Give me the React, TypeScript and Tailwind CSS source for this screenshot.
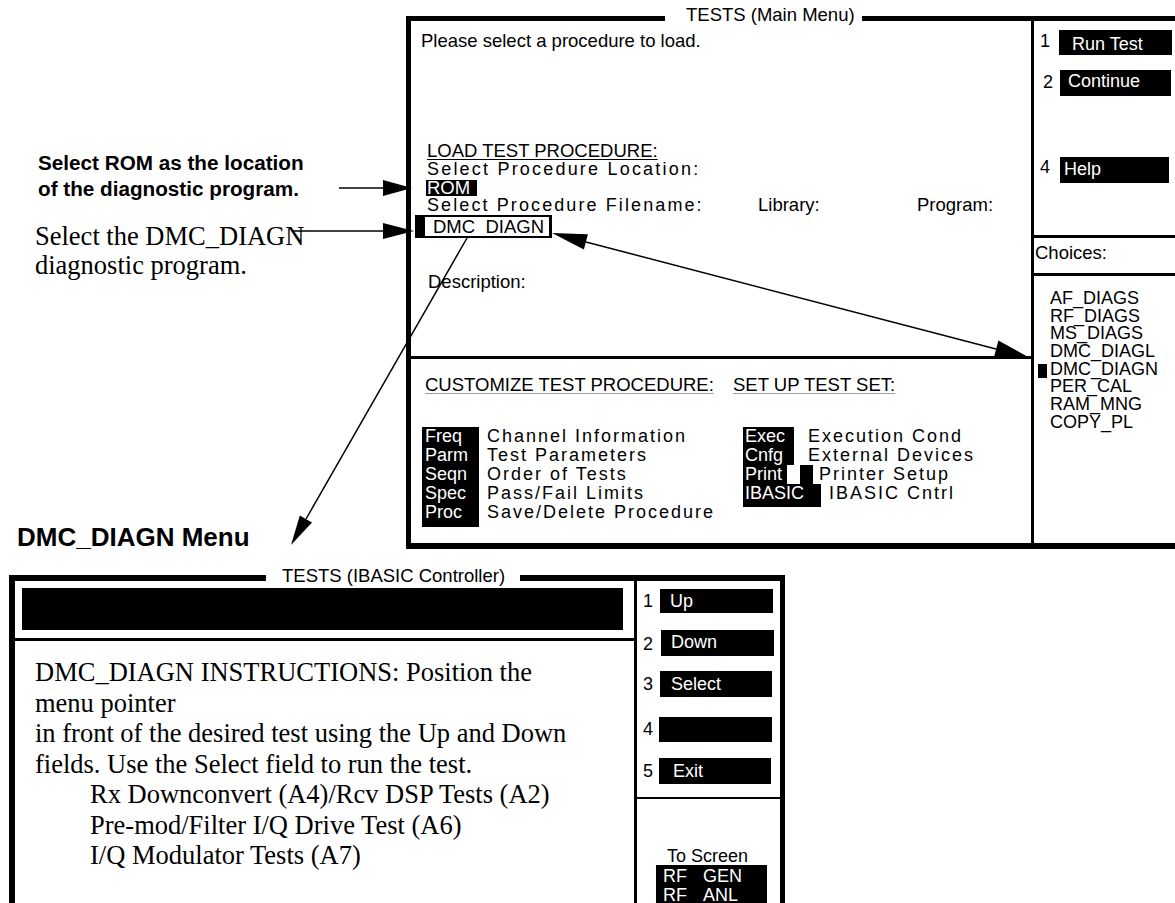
import React from "react"

/* ---------- data ---------- */
const choices = [
  "AF_DIAGS",
  "RF_DIAGS",
  "MS_DIAGS",
  "DMC_DIAGL",
  "DMC_DIAGN",
  "PER_CAL",
  "RAM_MNG",
  "COPY_PL",
]

const customize = [
  ["Freq", "Channel Information"],
  ["Parm", "Test Parameters"],
  ["Seqn", "Order of Tests"],
  ["Spec", "Pass/Fail Limits"],
  ["Proc", "Save/Delete Procedure"],
]

const ibasicKeys = [
  { n: "1", label: "Up", row: "mt-[8px]", digit: "w-[23px] pt-[3px]", box: "w-[113px] h-[24px] pl-[10px] pt-[3px]" },
  { n: "2", label: "Down", row: "mt-[17px]", digit: "w-[24px] pt-[5px]", box: "w-[113px] h-[26px] pl-[10px] pt-[3px]" },
  { n: "3", label: "Select", row: "mt-[15px]", digit: "w-[23px] pt-[4px]", box: "w-[112px] h-[26px] pl-[11px] pt-[4px]" },
  { n: "4", label: "", row: "mt-[20px]", digit: "w-[22px] pt-[3px]", box: "w-[113px] h-[25px] pl-[10px] pt-[3px]" },
  { n: "5", label: "Exit", row: "mt-[16px]", digit: "w-[22px] pt-[4px]", box: "w-[112px] h-[26px] pl-[14px] pt-[4px]" },
]

const serif = "font-['Liberation_Serif','Times_New_Roman',serif]"

/* ---------- left notes ---------- */
function LeftNotes() {
  return (
    <div className="w-[406px] shrink-0 flex flex-col">
      <div className="mt-[134px] pl-[38px] font-bold text-[20.7px] leading-[26px]">
        <div>Select ROM as the location</div>
        <div>of the diagnostic program.</div>
      </div>
      <div className={`mt-[20px] pl-[35px] text-[26.5px] leading-[29px] ${serif}`}>
        <div>Select the DMC_DIAGN</div>
        <div>diagnostic program.</div>
      </div>
      <div className="mt-[244px] h-[24px] pl-[17px] font-bold text-[26px] leading-[26px] whitespace-nowrap">
        DMC_DIAGN Menu
      </div>
    </div>
  )
}

/* ---------- TESTS (Main Menu) ---------- */
function MainMenu() {
  return (
    <div className="w-[769px] shrink-0 flex flex-col">
      {/* title on the top border */}
      <div className="flex h-[5px] items-start">
        <div className="w-[259px] h-[5px] bg-black" />
        <div className="ml-[21px] -mt-[10px] text-[18.5px] leading-[18px] whitespace-nowrap">
          TESTS (Main Menu)
        </div>
        <div className="ml-[7px] flex-1 h-[5px] bg-black" />
      </div>

      <div className="flex h-[528px] border-l-[5px] border-b-[6px] border-black">
        {/* main area */}
        <div className="w-[620px] flex flex-col">
          <div className="h-[335px] flex flex-col">
            <div className="mt-[11px] pl-[10px] text-[18.5px] leading-[18px]">
              Please select a procedure to load.
            </div>
            <div className="mt-[92px] pl-[16px] text-[18.5px] leading-[18px] underline underline-offset-[2px]">
              LOAD TEST PROCEDURE:
            </div>
            <div className="pl-[16px] text-[18px] leading-[18px] tracking-[2.2px] whitespace-nowrap">
              Select Procedure Location:
            </div>
            <div className="ml-[15px] mt-[2px] w-[51px] h-[16px] bg-black text-white text-[18.5px] leading-[16px] pl-[1px]">
              ROM
            </div>
            <div className="flex pl-[16px] text-[18px] leading-[18px] whitespace-nowrap">
              <div className="w-[331px] tracking-[2.1px]">Select Procedure Filename:</div>
              <div className="w-[159px] text-[18.5px]">Library:</div>
              <div className="text-[18.5px]">Program:</div>
            </div>
            <div className="ml-[4px] mt-[1px] w-[137px] h-[23px] bg-black pl-[10px] pt-[2px] pr-[3px] pb-[2px]">
              <div className="h-full bg-white pl-[8px] text-[18.5px] leading-[19px]">DMC_DIAGN</div>
            </div>
            <div className="mt-[35px] pl-[17px] text-[18.5px] leading-[18px]">Description:</div>
          </div>

          <div className="h-[3px] bg-black" />

          <div className="flex-1 pt-[17px] pl-[14px]">
            <div className="flex text-[18.5px] leading-[18px] whitespace-nowrap">
              <div className="w-[308px] underline underline-offset-[2px] decoration-gray-400">
                CUSTOMIZE TEST PROCEDURE:
              </div>
              <div className="underline underline-offset-[2px] decoration-gray-400">SET UP TEST SET:</div>
            </div>

            <div className="mt-[33px] -ml-[3px] flex text-[18px] leading-[19px] whitespace-nowrap">
              <div className="w-[321px] flex">
                <div className="w-[57px] bg-black text-white pl-[3px] pb-[5px]">
                  {customize.map(([k]) => (
                    <div key={k}>{k}</div>
                  ))}
                </div>
                <div className="pl-[8px] tracking-[2px]">
                  {customize.map(([k, v]) => (
                    <div key={k}>{v}</div>
                  ))}
                </div>
              </div>

              <div className="flex flex-col">
                <div className="flex h-[19px]">
                  <div className="w-[51px] bg-black text-white pl-[2px]">Exec</div>
                  <div className="ml-[14px] tracking-[2px]">Execution Cond</div>
                </div>
                <div className="flex h-[19px]">
                  <div className="w-[51px] bg-black text-white pl-[2px]">Cnfg</div>
                  <div className="ml-[14px] tracking-[2px]">External Devices</div>
                </div>
                <div className="flex h-[19px]">
                  <div className="w-[44px] bg-black text-white pl-[2px]">Print</div>
                  <div className="ml-[13px] w-[13px] bg-black" />
                  <div className="ml-[6px] tracking-[2px]">Printer Setup</div>
                </div>
                <div className="flex">
                  <div className="w-[78px] h-[23px] bg-black text-white pl-[2px]">IBASIC</div>
                  <div className="ml-[8px] tracking-[2px]">IBASIC Cntrl</div>
                </div>
              </div>
            </div>
          </div>
        </div>

        <div className="w-[3px] bg-black" />

        {/* right column */}
        <div className="flex-1 flex flex-col text-[18px] leading-[18px]">
          <div className="h-[214px]">
            <div className="flex mt-[9px]">
              <div className="w-[25px] pl-[6px] pt-[2px]">1</div>
              <div className="w-[113px] h-[25px] bg-black text-white pl-[13px] pt-[5px]">Run Test</div>
            </div>
            <div className="flex mt-[15px]">
              <div className="w-[26px] pl-[9px] pt-[3px]">2</div>
              <div className="w-[111px] h-[26px] bg-black text-white pl-[8px] pt-[2px]">Continue</div>
            </div>
            <div className="flex mt-[61px]">
              <div className="w-[26px] pl-[6px] pt-[1px]">4</div>
              <div className="w-[109px] h-[26px] bg-black text-white pl-[4px] pt-[3px]">Help</div>
            </div>
          </div>
          <div className="h-[3px] -ml-[2px] bg-black" />
          <div className="h-[35px] pl-[1px] pt-[6px] text-[18.5px]">Choices:</div>
          <div className="h-[3px] -ml-[2px] bg-black" />
          <div className="flex-1 pt-[14px] pl-[4px] text-[18px] leading-[17.7px]">
            {choices.map((c) => (
              <div key={c} className="flex h-[17.7px]">
                <div className="w-[12px]">
                  {c === "DMC_DIAGN" && <div className="mt-[3px] w-[9px] h-[14px] bg-black" />}
                </div>
                <div>{c}</div>
              </div>
            ))}
          </div>
        </div>
      </div>
    </div>
  )
}

/* ---------- TESTS (IBASIC Controller) ---------- */
function IbasicPanel() {
  return (
    <div className="mt-[26px] ml-[9px] w-[776px] flex flex-col">
      <div className="flex h-[6px] items-start">
        <div className="w-[257px] h-[6px] bg-black" />
        <div className="ml-[16px] -mt-[8px] text-[18.5px] leading-[18px] whitespace-nowrap">
          TESTS (IBASIC Controller)
        </div>
        <div className="ml-[15px] flex-1 h-[6px] bg-black" />
      </div>

      <div className="flex h-[330px] border-l-[6px] border-r-[5px] border-black">
        <div className="w-[619px] flex flex-col">
          <div className="h-[57px] pt-[7px] pl-[7px]">
            <div className="w-[601px] h-[42px] bg-black" />
          </div>
          <div className="h-[3px] bg-black" />
          <div className={`pt-[16px] pl-[20px] text-[26.5px] leading-[30.5px] whitespace-nowrap ${serif}`}>
            <div>DMC_DIAGN INSTRUCTIONS: Position the</div>
            <div>menu pointer</div>
            <div>in front of the desired test using the Up and Down</div>
            <div>fields. Use the Select field to run the test.</div>
            <div className="pl-[55px]">
              <div>Rx Downconvert (A4)/Rcv DSP Tests (A2)</div>
              <div>Pre-mod/Filter I/Q Drive Test (A6)</div>
              <div>I/Q Modulator Tests (A7)</div>
            </div>
          </div>
        </div>

        <div className="w-[3px] bg-black" />

        <div className="flex-1 flex flex-col text-[18px] leading-[18px]">
          {ibasicKeys.map((k) => (
            <div key={k.n} className={`flex ${k.row}`}>
              <div className={`pl-[6px] ${k.digit}`}>{k.n}</div>
              <div className={`bg-black text-white ${k.box}`}>{k.label}</div>
            </div>
          ))}
          <div className="mt-[13px] h-[3px] bg-black" />
          <div className="mt-[48px] pl-[30px] whitespace-nowrap">To Screen</div>
          <div className="ml-[19px] w-[111px] h-[60px] bg-black text-white pl-[7px] pt-[2px] leading-[19px]">
            <div className="flex">
              <div className="w-[40px]">RF</div>
              <div>GEN</div>
            </div>
            <div className="flex">
              <div className="w-[40px]">RF</div>
              <div>ANL</div>
            </div>
          </div>
        </div>
      </div>
    </div>
  )
}

/* ---------- callout arrows ---------- */
function Arrows() {
  return (
    <svg
      className="absolute inset-0 pointer-events-none"
      width="1175"
      height="903"
      viewBox="0 0 1175 903"
    >
      <g stroke="black" strokeWidth="1.5" fill="none">
        <line x1="339" y1="188" x2="386" y2="188" />
        <line x1="292" y1="231" x2="386" y2="231" />
        <line x1="586" y1="242" x2="996" y2="349" />
        <line x1="467" y1="238" x2="306" y2="519" />
      </g>
      <g fill="black">
        <polygon points="383,180 412,188 383,196" />
        <polygon points="383,223 414,231 383,239" />
        <polygon points="552,233 587.9,234.2 583.9,249.6" />
        <polygon points="1030,358 993.8,357.8 998.4,340.4" />
        <polygon points="291,545 312,522.5 299.8,515.5" />
      </g>
    </svg>
  )
}

export default function App() {
  return (
    <div className="relative w-[1175px] h-[903px] overflow-hidden bg-white text-black font-['Liberation_Sans',Arial,sans-serif]">
      <div className="flex pt-[16px]">
        <LeftNotes />
        <MainMenu />
      </div>
      <IbasicPanel />
      <Arrows />
    </div>
  )
}
